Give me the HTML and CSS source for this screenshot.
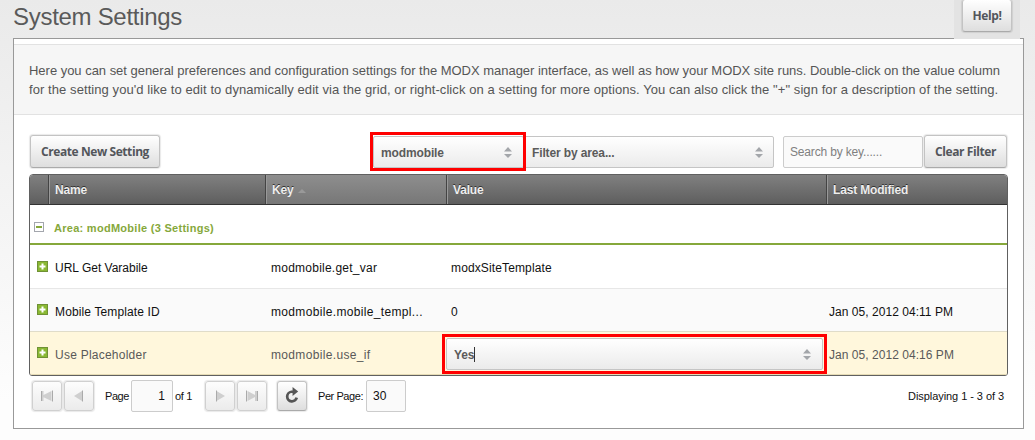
FILE: index.html
```html
<!DOCTYPE html>
<html lang="en">
<head>
<meta charset="utf-8">
<title>System Settings</title>
<link rel="stylesheet" href="styles.css">
</head>
<body>
<header class="page-head">
  <h1 class="title">System Settings</h1>
  <div class="help-tab"><button class="btn help">Help!</button></div>
</header>
<main class="panel">
  <p class="intro"><span class="line line-a">Here you can set general preferences and configuration settings for the MODX manager interface, as well as how your MODX site runs. Double-click on the value column</span><span class="line line-b">for the setting you'd like to edit to dynamically edit via the grid, or right-click on a setting for more options. You can also click the "+" sign for a description of the setting.</span></p>
  <div class="toolbar">
    <button class="btn create">Create New Setting</button>
    <div class="combo namespace marked"><span>modmobile</span><svg class="arrows" width="8" height="11" viewBox="0 0 8 11"><path d="M0 4.500 4 0 8 4.500zM0 7h8L4 11z"/></svg></div>
    <div class="combo area"><span>Filter by area...</span><svg class="arrows" width="8" height="11" viewBox="0 0 8 11"><path d="M0 4.500 4 0 8 4.500zM0 7h8L4 11z"/></svg></div>
    <div class="field search">Search by key......</div>
    <button class="btn clear">Clear Filter</button>
  </div>
  <section class="grid">
    <div class="row head">
      <div class="th"></div>
      <div class="th">Name</div>
      <div class="th sorted">Key<i class="sort"></i></div>
      <div class="th">Value</div>
      <div class="th">Last Modified</div>
    </div>
    <div class="group">
      <svg width="10" height="10" viewBox="0 0 10 10"><rect class="collapse-box" x=".5" y=".5" width="9" height="9"/><path class="collapse-bar" d="M2 4h6v2H2z"/></svg>
      <span>Area: modMobile (3 Settings)</span>
    </div>
    <div class="row body first">
      <svg class="plus" width="11" height="11" viewBox="0 0 11 11"><rect class="plus-edge" width="11" height="11"/><rect class="plus-fill" x="1" y="1" width="9" height="9"/><path class="plus-sign" d="M4.500 2.500h2v2h2v2h-2v2h-2v-2h-2v-2h2z"/></svg>
      <span>URL Get Varabile</span><span class="ls-2">modmobile.get_var</span><span class="ls-1">modxSiteTemplate</span><span></span>
    </div>
    <div class="row body alt">
      <svg class="plus" width="11" height="11" viewBox="0 0 11 11"><rect class="plus-edge" width="11" height="11"/><rect class="plus-fill" x="1" y="1" width="9" height="9"/><path class="plus-sign" d="M4.500 2.500h2v2h2v2h-2v2h-2v-2h-2v-2h2z"/></svg>
      <span class="ls-1">Mobile Template ID</span><span class="ls-3">modmobile.mobile_templ...</span><span>0</span><span class="date">Jan 05, 2012 04:11 PM</span>
    </div>
    <div class="row body selected">
      <svg class="plus" width="11" height="11" viewBox="0 0 11 11"><rect class="plus-edge" width="11" height="11"/><rect class="plus-fill" x="1" y="1" width="9" height="9"/><path class="plus-sign" d="M4.500 2.500h2v2h2v2h-2v2h-2v-2h-2v-2h2z"/></svg>
      <span class="ls-2">Use Placeholder</span><span class="ls-3">modmobile.use_if</span>
      <div class="cell-edit"><div class="combo editor marked"><span>Yes</span><i class="caret"></i><svg class="arrows" width="8" height="11" viewBox="0 0 8 11"><path d="M0 4.500 4 0 8 4.500zM0 7h8L4 11z"/></svg></div></div>
      <span class="date">Jan 05, 2012 04:16 PM</span>
    </div>
  </section>
  <footer class="pager">
    <button class="btn step off"><svg width="14" height="14" viewBox="0 0 14 14"><path class="off-icon" d="M1 2v10h2.500V8.200L11.500 12V2L3.500 6V2z"/><path class="off-edge" d="M1.500 2v10M12.500 1.500v11"/></svg></button>
    <button class="btn step off"><svg width="14" height="14" viewBox="0 0 14 14"><path class="off-icon" d="M2 7l8-5v10z"/><path class="off-edge" d="M10.500 1.500v11"/></svg></button>
    <span class="label page">Page</span>
    <div class="field number">1</div>
    <span class="label of">of 1</span>
    <button class="btn step off"><svg width="14" height="14" viewBox="0 0 14 14"><path class="off-icon" d="M12 7L3.500 2v10z"/><path class="off-edge" d="M3.500 1.500v11"/></svg></button>
    <button class="btn step off"><svg width="14" height="14" viewBox="0 0 14 14"><path class="off-icon" d="M2.500 2v10L10 8v4h2.500V2H10v4z"/><path class="off-edge" d="M1.500 1.500v11M12.500 2v10"/></svg></button>
    <button class="btn step reload"><svg width="16" height="18" viewBox="0 0 14 16"><path class="reload-arc" d="M8.500 4.200H6.500a4.300 4.300 0 1 0 4.700 5.300"/><path class="reload-head" d="M7.500 0v8l5-4z"/></svg></button>
    <span class="label per">Per Page:</span>
    <div class="field size">30</div>
    <span class="label total">Displaying 1 - 3 of 3</span>
  </footer>
</main>
</body>
</html>
```
FILE: styles.css
```css
* { box-sizing: border-box; }
body {
  margin: 0;
  height: 440px;
  overflow: hidden;
  background: linear-gradient(#eaeaea, #fdfdfd 400px);
  font: 12px "Liberation Sans", Arial, sans-serif;
  color: #111;
}
.page-head {
  display: flex;
  justify-content: space-between;
  height: 38px;
  padding: 0 15px 0 13px;
}
.title {
  margin: 3px 0 0;
  font-size: 24px;
  font-weight: 400;
  line-height: 28px;
  letter-spacing: -.29px;
  color: #5a5a5a;
}
.help-tab {
  position: relative;
  width: 66px;
  height: 39px;
  padding-left: 8px;
  background: #e3e3e3;
}
.btn {
  display: flex;
  align-items: center;
  justify-content: center;
  flex: none;
  padding: 0;
  border: 1px solid #c3c3c3;
  border-bottom-color: #aaa;
  border-radius: 3px;
  background: linear-gradient(#fff, #dedede);
  box-shadow: 0 0 1px 1px rgba(0, 0, 0, .09);
  font: bold 12px "Open Sans", "Noto Sans", sans-serif;
  letter-spacing: -.42px;
  color: #53565b;
}
.help {
  width: 50px;
  height: 32px;
  border-top: 0;
}
.panel {
  width: 1011px;
  height: 391px;
  margin-left: 13px;
  padding-top: 5px;
  border: 1px solid #999;
  background: #fff;
}
.intro {
  height: 71px;
  margin: 0;
  padding: 16px 0 0 15px;
  border: solid #e2e2e2;
  border-width: 1px 0;
  background: #f6f6f6;
  font-size: 13px;
  line-height: 19px;
  color: #555;
  white-space: nowrap;
}
.line { display: block; }
.line-a { letter-spacing: -.023px; }
.line-b { letter-spacing: .075px; }
.toolbar {
  display: flex;
  height: 59px;
  padding: 20px 15px 0 16px;
}
.create { width: 130px; height: 33px; }
.clear { width: 83px; height: 33px; margin-left: 1px; }
.combo {
  display: flex;
  align-items: center;
  position: relative;
  height: 32px;
  margin-top: 1px;
  padding: 1px 10px 0 7px;
  border: 1px solid #c5c5c5;
  border-radius: 2px;
  background: linear-gradient(#fff, #ebebeb);
  font-weight: bold;
  letter-spacing: -.13px;
  color: #5b5b5b;
}
.arrows { margin-left: auto; fill: #a3a6aa; }
.marked { z-index: 1; }
.marked::after {
  content: "";
  position: absolute;
  border: 3px solid #f00;
}
.namespace { width: 151px; margin-left: 213px; padding-right: 11px; }
.namespace.marked::after { inset: -5px -3px -4px -4px; }
.area { width: 250px; }
.field {
  display: flex;
  align-items: center;
  height: 32px;
  border: 1px solid #ccc;
  border-radius: 2px;
  background: #fafafa;
}
.search {
  width: 140px;
  margin: 1px 0 0 9px;
  padding-left: 6px;
  letter-spacing: -.16px;
  color: #808080;
}
.grid {
  width: 979px;
  height: 202px;
  margin-left: 15px;
  border: 1px solid #606060;
  border-radius: 4px 4px 3px 3px;
}
.row {
  display: grid;
  grid-template-columns: 19px 217px 181px 380px 180px;
  align-items: center;
}
.head {
  height: 30px;
  align-items: stretch;
  border-bottom: 1px solid #333;
  border-radius: 3px 3px 0 0;
  background: linear-gradient(#808080, #5e5e5e);
  font-weight: bold;
  letter-spacing: -.17px;
  color: #eee;
  text-shadow: 0 -1px #333;
}
.th {
  display: flex;
  align-items: center;
  padding-left: 5px;
  border-left: 1px solid #999;
  border-right: 1px solid #444;
}
.th:first-child { border-left: 0; }
.th:last-child { border-right: 0; }
.sorted { background: linear-gradient(#8e8e8e, #777); }
.sort {
  margin: 3px 0 0 4px;
  border: 4px solid transparent;
  border-top: 0;
  border-bottom-color: #999;
}
.group {
  display: flex;
  align-items: center;
  height: 40px;
  padding: 7px 0 0 4px;
  border-bottom: 2px solid #86a83b;
  gap: 10px;
  font-size: 11px;
  font-weight: bold;
  letter-spacing: .28px;
  color: #86a83b;
}
.group svg { margin-bottom: 2px; }
.collapse-box { fill: #fff; stroke: #a3a6ad; }
.collapse-bar { fill: #86a83b; }
.body > span {
  padding: 3px 0 0 6px;
  white-space: nowrap;
}
.body > span:nth-child(3) { padding-left: 5px; }
.body > span:nth-child(4) { padding-left: 4px; }
.body > .date { padding-left: 2px; letter-spacing: .04px; }
.first { height: 44px; border-bottom: 1px solid #e7e7e7; }
.alt { height: 43px; border-bottom: 1px solid #e0dcc9; background: #fafafa; }
.selected {
  height: 43px;
  border-bottom: 1px solid #e5dbb5;
  border-radius: 0 0 2px 2px;
  background: #fff7dc;
  color: #595959;
}
.plus { margin: 0 0 1px 7px; }
.plus-edge { fill: #6f9135; }
.plus-fill { fill: #8ab833; }
.plus-sign { fill: #fff; }
.ls-1 { letter-spacing: .13px; }
.ls-2 { letter-spacing: .24px; }
.ls-3 { letter-spacing: .34px; }
.editor { width: 377px; height: 32px; padding: 2px 11px 0 7px; margin-left: -1px; }
.editor.marked::after { inset: -5px; }
.caret { width: 1px; height: 15px; background: #333; }
.pager {
  display: flex;
  align-items: center;
  height: 38px;
  margin-top: 1px;
  padding: 0 19px 0 18px;
  font-size: 11px;
}
.step { width: 30px; height: 30px; margin-right: 2px; }
.off { border-color: #d0d0d0; background: linear-gradient(#fdfdfd, #ebebeb); }
.off-icon { fill: #cfcfcf; }
.off-edge { fill: none; stroke: #aaa; }
.reload { margin-left: 8px; }
.reload-arc { fill: none; stroke: #555; stroke-width: 2.4; }
.reload-head { fill: #555; }
.label { letter-spacing: -.06px; white-space: nowrap; }
.page { width: 26px; margin-left: 9px; letter-spacing: -.42px; }
.number { width: 42px; justify-content: flex-end; padding-right: 7px; font-size: 12px; }
.of { width: 32px; padding-left: 2px; letter-spacing: -.3px; }
.per { width: 48px; margin-left: 9px; letter-spacing: -.43px; }
.size { width: 40px; padding-left: 6px; font-size: 12px; }
.total { margin-left: auto; }
```
